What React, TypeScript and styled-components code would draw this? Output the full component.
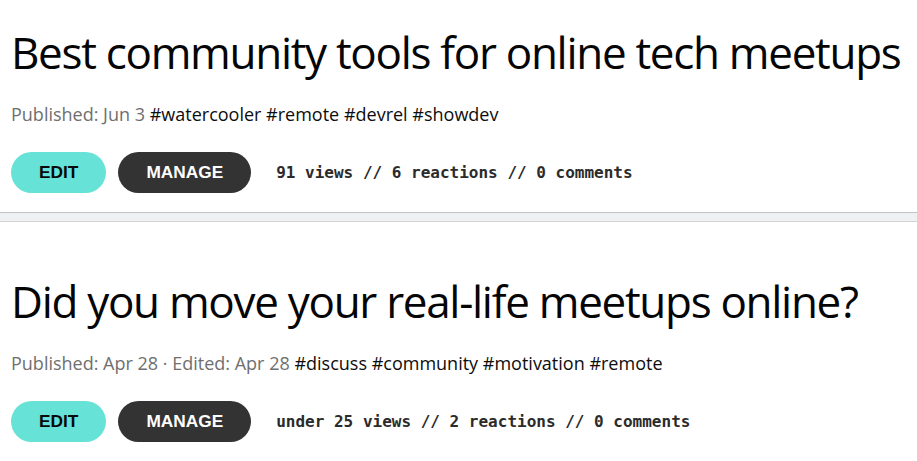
import styled, { createGlobalStyle } from 'styled-components'

const GlobalStyle = createGlobalStyle`
  html, body {
    margin: 0;
    padding: 0;
    background: #ffffff;
  }
  body {
    font-family: "Open Sans", "Noto Sans", sans-serif;
    color: #0a0a0a;
  }
`

const Feed = styled.div`
  display: flex;
  flex-direction: column;
  width: 917px;
`

const Post = styled.article<{ $first?: boolean }>`
  display: flex;
  flex-direction: column;
  padding: ${({ $first }) => ($first ? '24px' : '51px')} 11px 19px 11px;
`

const Title = styled.h2`
  margin: 0;
  font-family: "Open Sans", "Noto Sans", sans-serif;
  font-size: 44px;
  line-height: 56px;
  font-weight: 450;
  letter-spacing: -1.3px;
  color: #050505;
  white-space: nowrap;
`

const Meta = styled.p`
  margin: 22px 0 0;
  font-size: 18px;
  line-height: 24px;
  color: #6f6f6f;
  white-space: nowrap;
`

const Tag = styled.span`
  color: #0d0d0d;
`

const Actions = styled.div`
  display: flex;
  align-items: center;
  margin-top: 26px;
`

const Pill = styled.button<{ $variant: 'edit' | 'manage' }>`
  height: 41px;
  padding: 0 28px;
  border: none;
  border-radius: 21px;
  font-family: "Liberation Sans", Arial, sans-serif;
  font-size: 17.3px;
  font-weight: 700;
  cursor: pointer;
  background: ${({ $variant }) => ($variant === 'edit' ? '#66e3d6' : '#333333')};
  color: ${({ $variant }) => ($variant === 'edit' ? '#0a0a0a' : '#ffffff')};
  margin-right: ${({ $variant }) => ($variant === 'edit' ? '12px' : '25px')};
`

const Stats = styled.span`
  font-family: "DejaVu Sans Mono", "Liberation Mono", monospace;
  font-size: 16px;
  font-weight: 700;
  color: #2b2b2b;
  white-space: nowrap;
`

const Divider = styled.div`
  height: 8px;
  background: #eef0f1;
  border-top: 1px solid #c4c4c4;
  border-bottom: 1px solid #d4d4d4;
`

type PostData = {
  title: string
  meta: string
  tags: string[]
  stats: string
}

const posts: PostData[] = [
  {
    title: 'Best community tools for online tech meetups',
    meta: 'Published: Jun 3',
    tags: ['watercooler', 'remote', 'devrel', 'showdev'],
    stats: '91 views // 6 reactions // 0 comments',
  },
  {
    title: 'Did you move your real-life meetups online?',
    meta: 'Published: Apr 28 · Edited: Apr 28',
    tags: ['discuss', 'community', 'motivation', 'remote'],
    stats: 'under 25 views // 2 reactions // 0 comments',
  },
]

export default function App() {
  return (
    <>
      <GlobalStyle />
      <Feed>
        {posts.map((post, i) => (
          <div key={post.title}>
            {i > 0 && <Divider />}
            <Post $first={i === 0}>
              <Title>{post.title}</Title>
              <Meta>
                {post.meta}{' '}
                <Tag>{post.tags.map((t) => `#${t}`).join(' ')}</Tag>
              </Meta>
              <Actions>
                <Pill $variant="edit">EDIT</Pill>
                <Pill $variant="manage">MANAGE</Pill>
                <Stats>{post.stats}</Stats>
              </Actions>
            </Post>
          </div>
        ))}
      </Feed>
    </>
  )
}
